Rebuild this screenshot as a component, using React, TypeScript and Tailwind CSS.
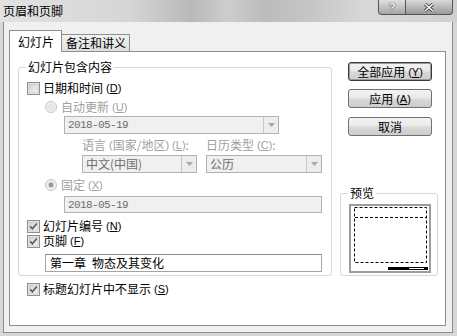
import React from "react";

const Key = ({ k }: { k: string }) => (
  <span className="ml-[3px] font-['Liberation_Sans',sans-serif] text-[11px] leading-[12px]">
    (<span className="underline underline-offset-1">{k}</span>)
  </span>
);

const CheckBox = ({ checked }: { checked?: boolean }) => (
  <svg width="13" height="13" viewBox="0 0 13 13" className="shrink-0">
    <defs>
      <linearGradient id="cbg" x1="0" y1="0" x2="1" y2="1">
        <stop offset="0" stopColor="#d2d2d2" />
        <stop offset="1" stopColor="#f4f4f4" />
      </linearGradient>
    </defs>
    <rect x="0.5" y="0.5" width="12" height="12" fill="#f6f6f6" stroke="#8e8e8e" />
    <rect x="2" y="2" width="9" height="9" fill="url(#cbg)" stroke="#b4b4b4" strokeWidth="0.6" />
    {checked && (
      <path d="M3.2 6.4 L5.4 8.8 L9.8 3.4" fill="none" stroke="#5c5c5c" strokeWidth="1.6" />
    )}
  </svg>
);

const Radio = ({ checked }: { checked?: boolean }) => (
  <svg width="12" height="12" viewBox="0 0 12 12" className="shrink-0">
    <circle cx="6" cy="6" r="5.5" fill="#f2f2f2" stroke="#c4c4c4" />
    <circle cx="6" cy="6" r="3.8" fill="#e6e6e6" />
    {checked && <circle cx="6" cy="6" r="2.4" fill="#9a9a9a" />}
  </svg>
);

const DropBtn = () => (
  <div className="w-[15px] h-full border-l border-[#c6c6c6] bg-[#ededed] flex items-center justify-center">
    <svg width="7" height="4" viewBox="0 0 7 4">
      <path d="M0 0 L7 0 L3.5 4 Z" fill="#a8a8a8" />
    </svg>
  </div>
);

const Combo = ({ text, w, mono }: { text: string; w: string; mono?: boolean }) => (
  <div className={`${w} h-[18px] border border-[#b2b2b2] bg-[#f0f0f0] flex items-stretch`}>
    <div
      className={`flex-1 pl-[3px] flex items-center text-[#6e6e6e] ${
        mono ? "font-['Liberation_Mono',monospace] text-[11px] tracking-[-0.6px]" : "text-[12px]"
      }`}
    >
      {text}
    </div>
    <DropBtn />
  </div>
);

const Btn = ({ label, k, def }: { label: string; k?: string; def?: boolean }) => (
  <button
    className={`w-[84px] h-[19px] rounded-[3px] border ${
      def ? "border-[#3c3c3c] shadow-[inset_0_0_0_1px_#9a9a9a]" : "border-[#707070]"
    } bg-[linear-gradient(#f3f3f3_0%,#e8e8e8_48%,#d9d9d9_52%,#cdcdcd_100%)] flex items-center justify-center text-[12px] leading-[14px] text-black`}
  >
    {label}
    {k && <Key k={k} />}
  </button>
);

export default function App() {
  return (
    <div className="w-[457px] h-[336px] overflow-hidden bg-[#d6d6d6] flex flex-col font-['Noto_Sans_CJK_SC','Noto_Sans',sans-serif] text-[12px] leading-[14px] text-black">
      {/* title bar */}
      <div className="h-[22px] shrink-0 flex items-start bg-[linear-gradient(90deg,#e2e2e2_0%,#d6d6d6_28%,#b9b9b9_42%,#cdcdcd_50%,#bcbcbc_58%,#c6c6c6_68%,#d8d8d8_80%,#cfcfcf_100%)]">
        <span className="pl-[3px] pt-[4px]">页眉和页脚</span>
        <div className="ml-auto mr-[4px] flex h-[15px]">
          <div className="w-[28px] h-full rounded-bl-[4px] border border-t-0 border-[#555] bg-[linear-gradient(#e0e0e0,#a6a6a6)] flex items-center justify-center text-white font-bold font-['Liberation_Sans',sans-serif] text-[11px] leading-[11px] [text-shadow:0_0_1px_#222,0_0_1px_#222]">
            ?
          </div>
          <div className="w-[47px] h-full rounded-br-[4px] border border-t-0 border-l-0 border-[#555] bg-[linear-gradient(#d8d8d8,#9a9a9a)] flex items-center justify-center">
            <svg width="10" height="9" viewBox="0 0 10 9">
              <path d="M1 1 L9 8 M9 1 L1 8" stroke="#333" strokeWidth="3" />
              <path d="M1 1 L9 8 M9 1 L1 8" stroke="#fff" strokeWidth="1.6" />
            </svg>
          </div>
        </div>
      </div>

      {/* client area */}
      <div className="ml-[3px] w-[450px] h-[311px] border border-t-0 border-[#8c8c8c] bg-[#f0f0f0]">
        <div className="h-[29px] flex items-end pl-[5px]">
          <div className="relative z-10 w-[53px] h-[22px] -mb-px border border-b-0 border-[#8e8e8e] bg-white pl-[8px] pt-[4px] text-[12px]">
            幻灯片
          </div>
          <div className="w-[68px] h-[17px] border border-l-0 border-b-0 border-[#8e8e8e] bg-[linear-gradient(#f2f2f2,#dedede)] pl-[4px] pt-[1px]">
            备注和讲义
          </div>
        </div>

        <div className="ml-[5px] w-[437px] h-[275px] border border-[#8e8e8e] bg-white">
          <div className="flex">
            {/* left group */}
            <fieldset className="ml-[8px] mt-[8px] w-[314px] h-[216px] border border-[#d6d6d6] rounded-[3px]">
              <legend className="ml-[7px] px-[2px] leading-[14px]">幻灯片包含内容</legend>
              <div className="pl-[8px] mt-[7px] h-[14px] flex items-center">
                <CheckBox />
                <span className="ml-[3px]">日期和时间</span>
                <Key k="D" />
              </div>
              <div className="pl-[26px] mt-[5px] h-[14px] flex items-center text-[#a0a0a0]">
                <Radio />
                <span className="ml-[4px]">自动更新</span>
                <Key k="U" />
              </div>
              <div className="pl-[45px] mt-[2px]">
                <Combo text="2018-05-19" w="w-[215px]" mono />
              </div>
              <div className="pl-[63px] mt-[4px] h-[14px] flex items-center text-[#a0a0a0]">
                <span className="w-[124px] flex items-center">
                  语言<span className="ml-[3px] font-['Liberation_Sans',sans-serif] text-[11px]">(</span>国家/地区<span className="font-['Liberation_Sans',sans-serif] text-[11px]">)</span>
                  <Key k="L" />:
                </span>
                <span className="flex items-center">
                  日历类型
                  <Key k="C" />:
                </span>
              </div>
              <div className="pl-[63px] mt-[3px] flex gap-[9px]">
                <Combo text="中文(中国)" w="w-[115px]" />
                <Combo text="公历" w="w-[116px]" />
              </div>
              <div className="pl-[26px] mt-[5px] h-[14px] flex items-center text-[#a0a0a0]">
                <Radio checked />
                <span className="ml-[4px]">固定</span>
                <Key k="X" />
              </div>
              <div className="pl-[45px] mt-[4px]">
                <div className="w-[258px] h-[17px] border border-[#b2b2b2] bg-[#f0f0f0] pl-[3px] flex items-center font-['Liberation_Mono',monospace] text-[11px] tracking-[-0.6px] text-[#6e6e6e]">
                  2018-05-19
                </div>
              </div>
              <div className="pl-[8px] mt-[6px] h-[14px] flex items-center leading-[12px]">
                <CheckBox checked />
                <span className="ml-[3px]">幻灯片编号</span>
                <Key k="N" />
              </div>
              <div className="pl-[8px] mt-[1px] h-[14px] flex items-center leading-[12px]">
                <CheckBox checked />
                <span className="ml-[3px]">页脚</span>
                <Key k="F" />
              </div>
              <div className="pl-[26px] mt-[6px]">
                <div className="w-[277px] h-[18px] border border-[#a4a4a4] border-t-[#8a8a8a] bg-white pl-[4px] flex items-center">
                  第一章<span className="ml-[6px]">物态及其变化</span>
                </div>
              </div>
            </fieldset>

            {/* right column */}
            <div className="ml-[8px] w-[98px] flex flex-col">
              <div className="ml-[8px] mt-[10px]">
                <Btn label="全部应用" k="Y" def />
              </div>
              <div className="ml-[8px] mt-[8px]">
                <Btn label="应用" k="A" />
              </div>
              <div className="ml-[8px] mt-[9px]">
                <Btn label="取消" />
              </div>
              <fieldset className="mt-[50px] w-[98px] h-[90px] border border-[#d6d6d6] rounded-[3px]">
                <legend className="ml-[7px] px-[2px] leading-[14px]">预览</legend>
                <div className="ml-[8px] mt-[4px] w-[82px] h-[69px] border-2 border-[#9c9c9c] bg-white">
                  <svg width="78" height="65" viewBox="0 0 78 65">
                    <rect x="3.5" y="1.5" width="72" height="55" fill="none" stroke="#000" strokeDasharray="3 2" />
                    <line x1="4" y1="11.5" x2="75" y2="11.5" stroke="#000" strokeDasharray="3 2" />
                    <rect x="37" y="61" width="40" height="3" fill="#000" />
                    <rect x="58" y="62" width="15" height="1" fill="#fff" />
                  </svg>
                </div>
              </fieldset>
            </div>
          </div>

          <div className="pl-[17px] mt-[6px] h-[14px] flex items-center">
            <CheckBox checked />
            <span className="ml-[3px]">标题幻灯片中不显示</span>
            <Key k="S" />
          </div>
        </div>
      </div>
    </div>
  );
}
